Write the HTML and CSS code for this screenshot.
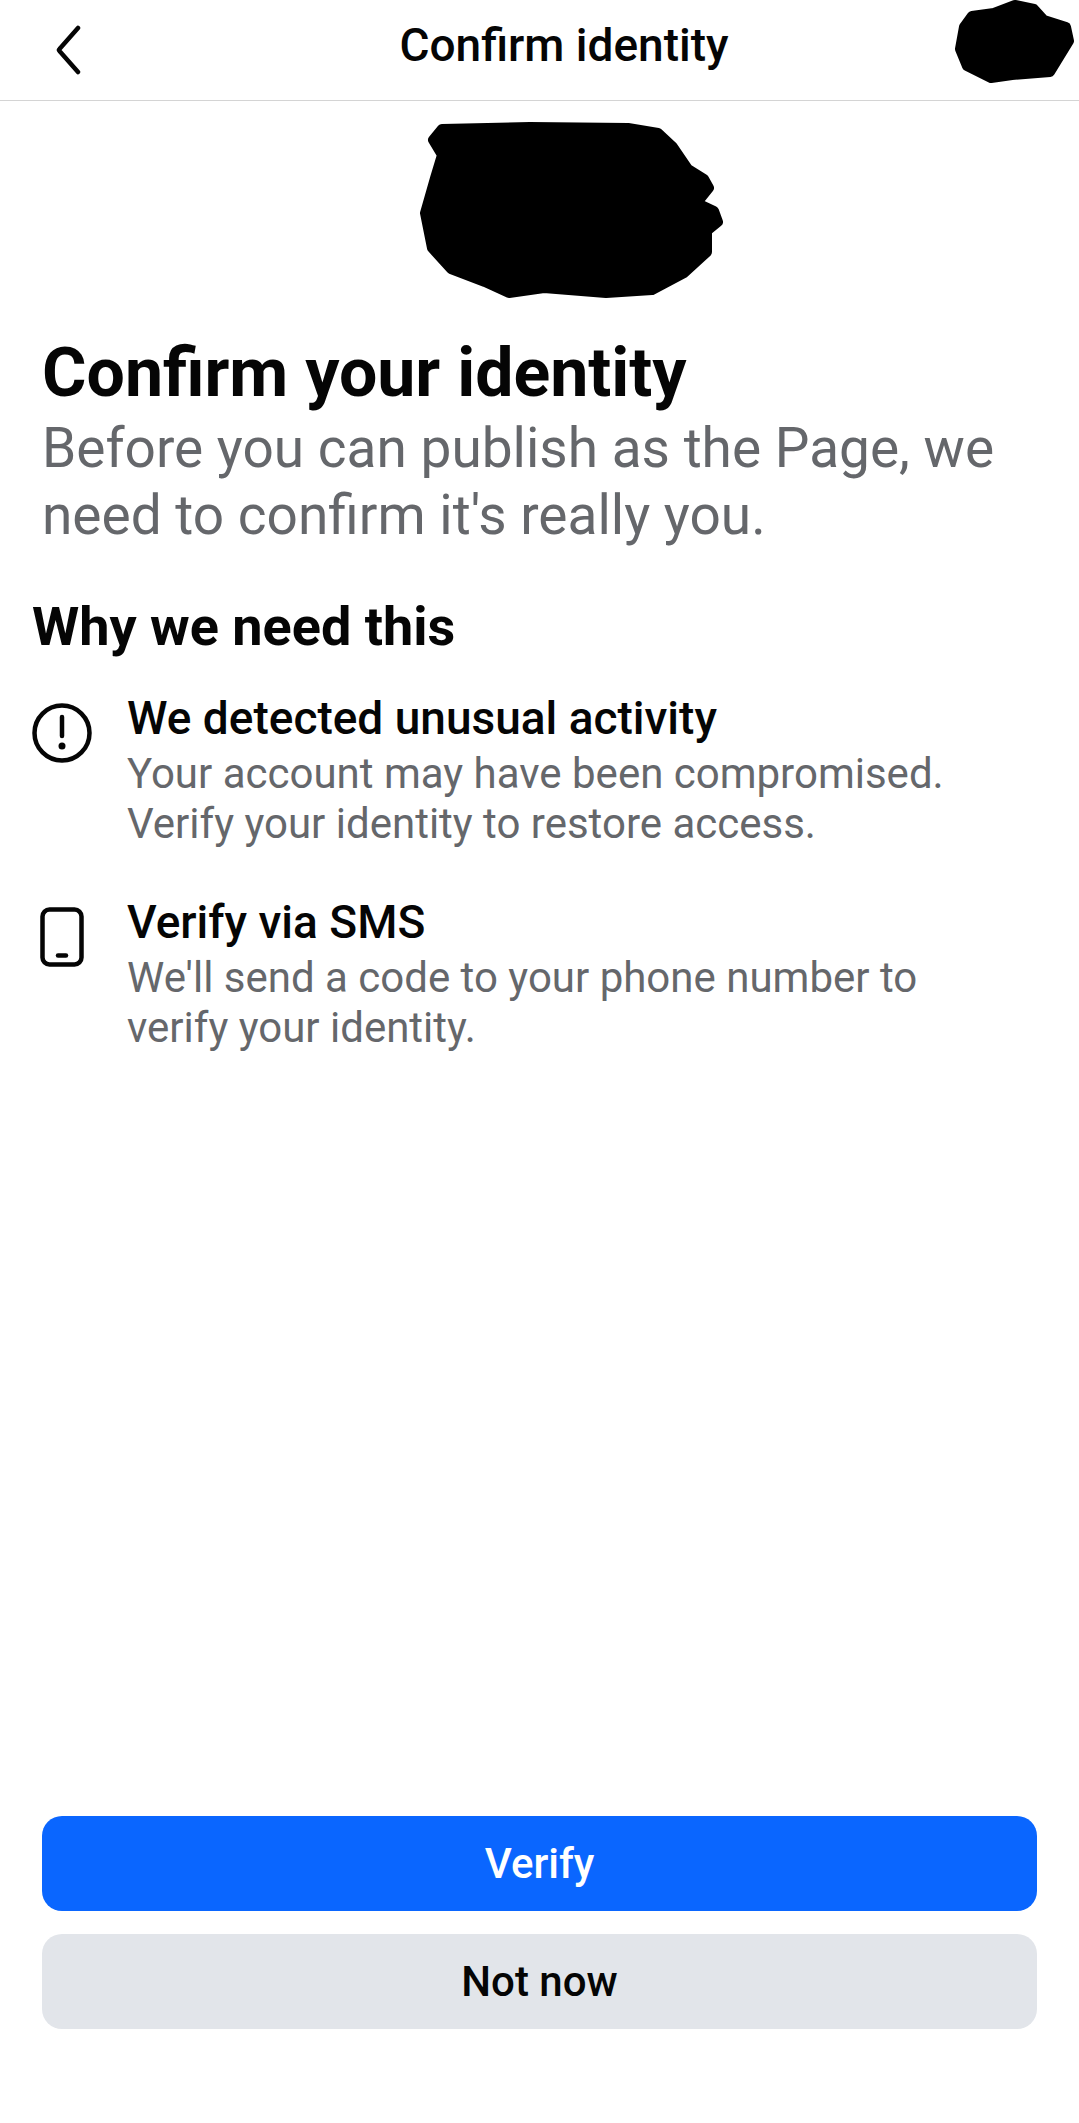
FILE: index.html
```html
<!DOCTYPE html>
<html lang="en">
<head>
    <meta charset="UTF-8">
    <meta name="viewport" content="width=device-width, initial-scale=1.0">
    <title>Confirm identity</title>
    <link rel="stylesheet" href="styles.css">
</head>
<body>
    <div class="page">
        <div class="topbar">
            <a class="back" href="#">
                <svg width="30" height="50" viewBox="0 0 30 50"><path d="M25 3 L6.500 24 Q5.500 25 6.500 26 L25 47" fill="none" stroke="#050505" stroke-width="4.500" stroke-linecap="round"/></svg>
            </a>
            <div class="topbar-title">Confirm identity</div>
            <svg class="avatar" width="120" height="85" viewBox="955 0 120 85"><polygon points="972,16 994,13 1015,5 1034,9 1044,20 1066,27 1069,41 1050,72 1012,75 991,78 967,66 960,49 964,27" fill="#000" stroke="#000" stroke-width="10" stroke-linejoin="round"/></svg>
        </div>

        <svg class="page-logo" width="305" height="177" viewBox="420 122 305 177"><polygon points="442,129 530,127 628,128 658,133 673,147 688,169 704,179 709,188 697,203 714,211 718,222 707,231 707,252 684,273 652,290 606,293 544,288 509,293 485,282 451,269 432,248 425,213 435,178 442,155 433,140" fill="#000" stroke="#000" stroke-width="10" stroke-linejoin="round"/></svg>

        <div class="intro">
            <h1>Confirm your identity</h1>
            <p>Before you can publish as the Page, we need to confirm it's really you.</p>
        </div>

        <h2>Why we need this</h2>

        <div class="reason">
            <svg class="reason-icon" width="60" height="60" viewBox="0 0 60 60">
                <circle cx="30" cy="30" r="27.500" fill="none" stroke="#050505" stroke-width="4.500"/>
                <path d="M30 14 V33" fill="none" stroke="#050505" stroke-width="4.500" stroke-linecap="round"/>
                <circle cx="30" cy="43" r="3.500" fill="#050505"/>
            </svg>
            <div class="reason-text">
                <h3>We detected unusual activity</h3>
                <p>Your account may have been compromised. Verify your identity to restore access.</p>
            </div>
        </div>

        <div class="reason">
            <svg class="reason-icon" width="60" height="60" viewBox="0 0 60 60">
                <rect x="10.500" y="2.500" width="39" height="55" rx="7" fill="none" stroke="#050505" stroke-width="4.500"/>
                <path d="M26 48.500 H34" fill="none" stroke="#050505" stroke-width="4.500" stroke-linecap="round"/>
            </svg>
            <div class="reason-text">
                <h3>Verify via SMS</h3>
                <p>We'll send a code to your phone number to verify your identity.</p>
            </div>
        </div>

        <div class="actions">
            <button class="btn btn-primary">Verify</button>
            <button class="btn btn-secondary">Not now</button>
        </div>
    </div>
</body>
</html>
```

FILE: styles.css
```css
body {
    font-family: Roboto, "Liberation Sans", sans-serif;
    background-color: #fff;
    color: #050505;
    margin: 0;
}

.page {
    display: flex;
    flex-direction: column;
    height: 2123px;
}

.topbar {
    display: grid;
    grid-template-columns: 1fr auto 1fr;
    align-items: center;
    height: 100px;
    padding: 0 4px 0 53px;
    border-bottom: 1px solid #d4d4d4;
}

.back {
    display: block;
    height: 50px;
}

.topbar-title {
    font-size: 46px;
    font-weight: 500;
    transform: translateY(-5px);
}

.avatar {
    justify-self: end;
    margin-top: -15px;
}

.page-logo {
    display: block;
    margin: 21px 0 0 420px;
}

.intro {
    margin: 34px 42px 0;
}

h1 {
    margin: 0;
    font-size: 68px;
    font-weight: 700;
    line-height: 80px;
}

.intro p {
    margin: 2px 0 0;
    font-size: 55px;
    line-height: 67px;
    color: #65676b;
}

h2 {
    margin: 46px 32px 0;
    font-size: 54px;
    font-weight: 700;
    line-height: 64px;
}

.reason {
    display: flex;
    gap: 35px;
    margin: 32px 32px 0;
}

.reason + .reason {
    margin-top: 46px;
}

.reason-icon {
    flex: none;
    margin-top: 12px;
}

.reason-text {
    flex: 1;
    padding-right: 50px;
}

h3 {
    margin: 0;
    font-size: 46px;
    font-weight: 500;
    line-height: 54px;
}

.reason-text p {
    margin: 4px 0 0;
    font-size: 42px;
    line-height: 50px;
    color: #65676b;
}

.actions {
    display: flex;
    flex-direction: column;
    gap: 23px;
    margin: auto 42px 94px;
}

.btn {
    height: 95px;
    border: none;
    border-radius: 20px;
    font-family: inherit;
    font-size: 42px;
    font-weight: 500;
}

.btn-primary {
    background-color: #0a66ff;
    color: #fff;
}

.btn-secondary {
    background-color: #e2e5ea;
    color: #050505;
}
```
